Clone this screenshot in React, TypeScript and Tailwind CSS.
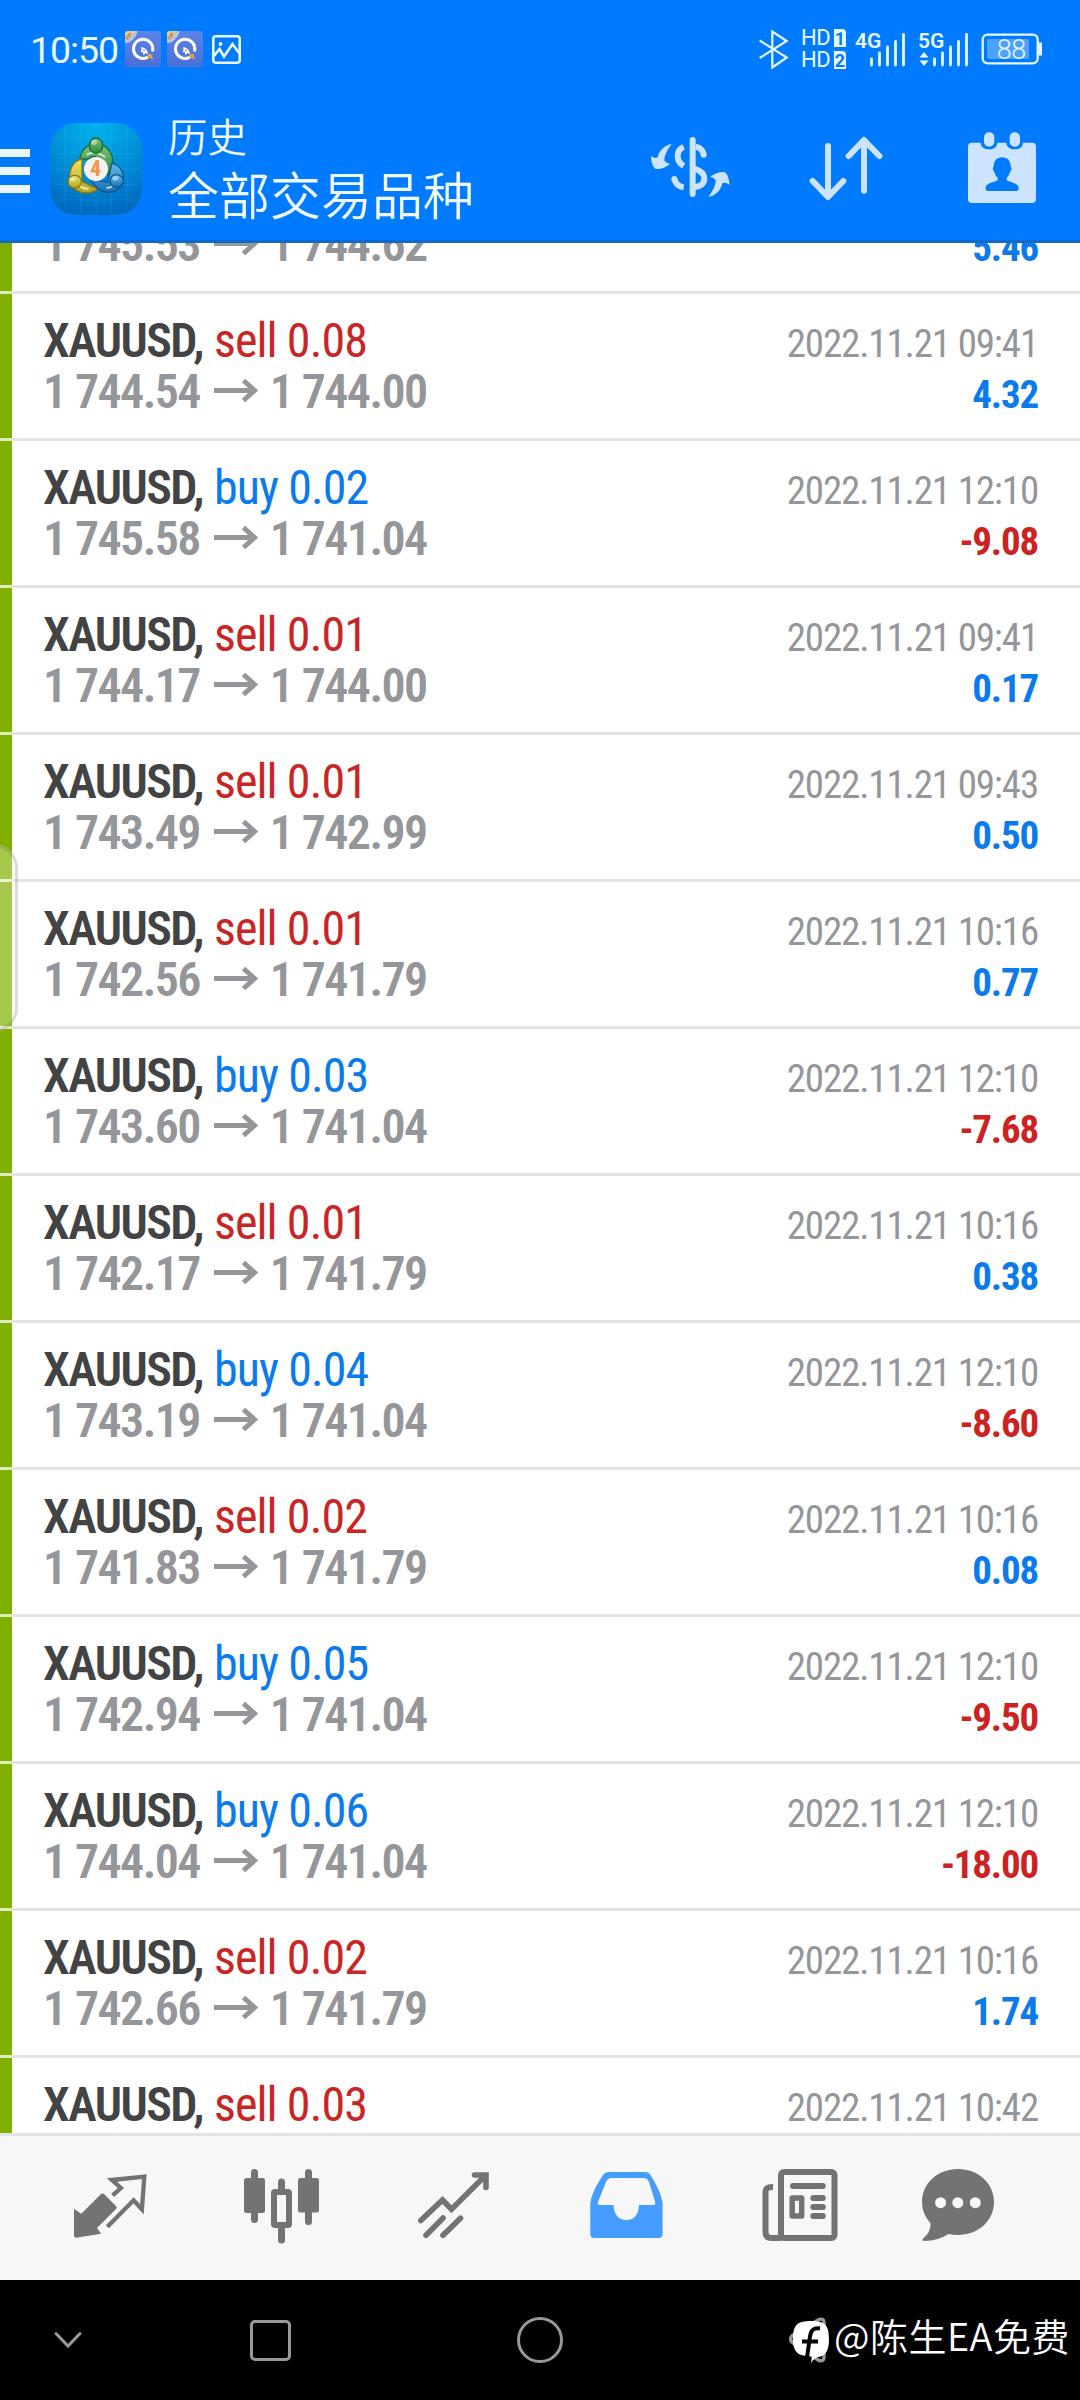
import type { ReactNode } from "react";

type Side = "buy" | "sell";

interface Deal {
  side: Side;
  volume: string;
  open: string;
  close: string;
  time: string;
  profit: string;
}

const DEALS: Deal[] = [
  { side: "sell", volume: "0.06", open: "1 745.53", close: "1 744.62", time: "2022.11.21 09:41", profit: "5.46" },
  { side: "sell", volume: "0.08", open: "1 744.54", close: "1 744.00", time: "2022.11.21 09:41", profit: "4.32" },
  { side: "buy", volume: "0.02", open: "1 745.58", close: "1 741.04", time: "2022.11.21 12:10", profit: "-9.08" },
  { side: "sell", volume: "0.01", open: "1 744.17", close: "1 744.00", time: "2022.11.21 09:41", profit: "0.17" },
  { side: "sell", volume: "0.01", open: "1 743.49", close: "1 742.99", time: "2022.11.21 09:43", profit: "0.50" },
  { side: "sell", volume: "0.01", open: "1 742.56", close: "1 741.79", time: "2022.11.21 10:16", profit: "0.77" },
  { side: "buy", volume: "0.03", open: "1 743.60", close: "1 741.04", time: "2022.11.21 12:10", profit: "-7.68" },
  { side: "sell", volume: "0.01", open: "1 742.17", close: "1 741.79", time: "2022.11.21 10:16", profit: "0.38" },
  { side: "buy", volume: "0.04", open: "1 743.19", close: "1 741.04", time: "2022.11.21 12:10", profit: "-8.60" },
  { side: "sell", volume: "0.02", open: "1 741.83", close: "1 741.79", time: "2022.11.21 10:16", profit: "0.08" },
  { side: "buy", volume: "0.05", open: "1 742.94", close: "1 741.04", time: "2022.11.21 12:10", profit: "-9.50" },
  { side: "buy", volume: "0.06", open: "1 744.04", close: "1 741.04", time: "2022.11.21 12:10", profit: "-18.00" },
  { side: "sell", volume: "0.02", open: "1 742.66", close: "1 741.79", time: "2022.11.21 10:16", profit: "1.74" },
  { side: "sell", volume: "0.03", open: "", close: "", time: "2022.11.21 10:42", profit: "" },
];

export default function App() {
  return (
    <div className="relative flex h-[2400px] w-[1080px] flex-col overflow-hidden bg-white font-['Roboto_Condensed',sans-serif]">
      <header className="h-[243px] shrink-0 border-b-[3px] border-[#1269c6] bg-[#007aff]">
        <StatusBar />
        <Toolbar />
      </header>

      {/* History list, scrolled so that the first deal is cut by the header */}
      <main className="min-h-0 flex-1 overflow-hidden">
        <div className="-mt-[96px]">
          {DEALS.map((deal, i) => (
            <DealRow key={i} deal={deal} />
          ))}
        </div>
      </main>

      <TabBar />
      <SystemNav />

      {/* Edge panel handle */}
      <div className="absolute top-[844px] -left-[30px] h-[188px] w-[48px] rounded-[24px] border-[3px] border-[#707070]/25 bg-white/30" />

      {/* Watermark */}
      <div className="absolute top-[2306px] right-[10px] flex items-center gap-[4px]">
        <WatermarkLogo />
        <span className="text-[38px] leading-[56px] font-[350] tracking-[0.5px] whitespace-nowrap text-white font-['Noto_Sans_CJK_SC',sans-serif]">
          @陈生EA免费
        </span>
      </div>
    </div>
  );
}

function StatusBar() {
  return (
    <div className="flex h-[98px] items-center justify-between pr-[36px] pl-[30px] text-[#e8f8ff]">
      <div className="flex items-center">
        <span className="w-[95px] pt-[4px] text-[37.5px] leading-none tracking-[-1.1px] font-['Roboto',sans-serif]">
          10:50
        </span>
        <RocketAppIcon />
        <RocketAppIcon className="ml-[6px]" />
        <svg className="ml-[9px] size-[29px]" viewBox="0 0 29 29" fill="none" stroke="currentColor" strokeWidth="2.6">
          <rect x="1.3" y="1.3" width="26.4" height="26.4" rx="2.5" />
          <path d="M2 21l5.5-7 4.5 7.5L20.500 9l6.500 9" />
          <circle cx="8.500" cy="9" r="1.900" fill="currentColor" stroke="none" />
        </svg>
      </div>
      <div className="flex items-center">
        <svg className="h-[40px] w-[32px]" viewBox="0 0 32 40" fill="none" stroke="currentColor" strokeWidth="2.2">
          <path d="M1.700 11.500l27 17-14.400 10V2.500l14.400 9.500-27 17" />
        </svg>
        <div className="ml-[11px] flex w-[45px] flex-col gap-[4px] text-[22px] leading-[18px] font-['Roboto',sans-serif]">
          {["1", "2"].map((n) => (
            <div key={n} className="flex items-center justify-between">
              <span className="tracking-[-0.5px]">HD</span>
              <span className="h-[18px] w-[12px] rounded-tr-[4px] bg-current text-center">
                <span className="block text-[18px] leading-[19px] font-bold text-[#007aff]">{n}</span>
              </span>
            </div>
          ))}
        </div>
        <Signal label="4G" className="ml-[8px]" />
        <Signal label="5G" className="ml-[9px]" transfer />
        <svg className="ml-[9px] h-[40px] w-[64px]" viewBox="0 0 64 40" fill="none">
          <rect x="2.700" y="5.700" width="55" height="28.600" rx="5" stroke="currentColor" strokeWidth="2.300" />
          <path d="M58.500 13.500h3.500v13h-3.500z" fill="currentColor" />
          <rect x="7" y="10" width="42" height="20" rx="2" fill="#fff" fillOpacity="0.3" />
          <text x="31.200" y="30" textAnchor="middle" fontSize="27" fill="currentColor" letterSpacing="-0.6" fontFamily="Roboto" fontWeight="350">
            88
          </text>
        </svg>
      </div>
    </div>
  );
}

function Signal({ label, className, transfer }: { label: string; className: string; transfer?: boolean }) {
  return (
    <svg className={`h-[40px] w-[54px] ${className}`} viewBox="0 0 54 40" fill="currentColor">
      <text x="1" y="18.500" fontSize="21" fontFamily="Roboto" fontWeight="600">
        {label}
      </text>
      <path d="M17.500 30v6M25.500 24v12M33.500 18v18M41.500 12.500v23.500M49.500 5.500v30.500" stroke="currentColor" strokeWidth="2.800" strokeLinecap="round" />
      {transfer && <path d="M2.500 28.500l4.500-5.500 4.500 5.500zM2.500 31.500l4.500 5.500 4.500-5.500z" />}
    </svg>
  );
}

function RocketAppIcon({ className = "" }: { className?: string }) {
  return (
    <svg className={`size-[36px] ${className}`} viewBox="0 0 108 108">
      <defs>
        <linearGradient id="rocket" x1="0" y1="0" x2="0" y2="1">
          <stop offset="0" stopColor="#5b84ea" />
          <stop offset="1" stopColor="#4a70d8" />
        </linearGradient>
      </defs>
      <rect width="108" height="108" rx="10" fill="url(#rocket)" />
      <path d="M0 36C14 38 34 22 38 0H10Q0 0 0 10z" fill="#b9c3dd" />
      <path d="M0 32L32 0H10Q0 0 0 10z" fill="#e5c99b" />
      <text x="3" y="27" fontSize="15" fontWeight="700" fill="#a8772f" transform="rotate(-45 6 24)" fontFamily="Roboto">
        VIP
      </text>
      <path d="M66 80A29 29 0 1 1 83 58" fill="none" stroke="#fff" strokeWidth="9" strokeLinecap="round" />
      <path d="M48 49c11 0 19 7 21 20l-7-3-6 7-3-10-6 1c3-5 3-10 1-15z" fill="#fff" />
      <circle cx="57" cy="58" r="2.500" fill="#4a70d8" />
      <path d="M68 70c7-4 15 0 14 7l3 9-10-4c-7 0-10-6-7-12z" fill="#e0a54c" />
    </svg>
  );
}

function Toolbar() {
  return (
    <div className="flex h-[142px] items-center pr-[36px] text-[#cce4ff]">
      <div className="mt-[4px] flex flex-col gap-[10px]">
        <span className="h-[8px] w-[30px] bg-[#ebf6ff]" />
        <span className="h-[8px] w-[30px] bg-[#ebf6ff]" />
        <span className="h-[8px] w-[30px] bg-[#ebf6ff]" />
      </div>
      <MetaTraderLogo />
      <div className="-mt-[1px] ml-[26px] flex flex-1 flex-col font-[350] text-[#eefaff] font-['Noto_Sans_CJK_SC',sans-serif]">
        <span className="text-[39.5px] leading-[48px]">历史</span>
        <span className="text-[51px] leading-[68px]">全部交易品种</span>
      </div>
      <div className="flex gap-[72px]">
        <svg className="size-[84px]" viewBox="24 12 252 252" fill="none" stroke="currentColor" strokeWidth="18">
          <path d="M158 51v162" strokeLinecap="round" />
          <path d="M131 72C108 81 106 114 131 129M167 71c14 3 22 12 24 24" />
          <circle cx="191" cy="95" r="9" fill="currentColor" stroke="none" />
          <path d="M131 193c-15-2-24-10-28-25" />
          <circle cx="103" cy="168" r="9" fill="currentColor" stroke="none" />
          <path d="M162 137c20 6 31 15 31 29 0 15-11 25-31 27" />
          <g fill="currentColor" stroke="none">
            <path d="M95 63C75 66 57 82 53 103c-6 3-14 1-20-5 0 17 6 40 17 40 15 0 30-6 40-16-8 0-14-4-17-10 0-17 11-34 22-49z" />
            <path d="M205 222c20-3 38-19 42-41 6-3 15-2 21 5 0-17-6-39-18-39-14 0-30 6-40 15 8 0 14 4 17 10 0 17-11 36-22 50z" />
          </g>
        </svg>
        <svg className="size-[84px]" viewBox="612 387 252 252" fill="none" stroke="currentColor" strokeWidth="18" strokeLinecap="round" strokeLinejoin="round">
          <path d="M684 444v152M638 549l46 48 46-48M792 578V428M746 474l46-48 46 48" />
        </svg>
        <svg className="size-[84px]" viewBox="1080 387 252 252" fill="currentColor">
          <path d="M1116 434h26c0 12 10 20 25 20s25-8 25-20h27c0 12 10 20 25 20s25-8 25-20h27q12 0 12 12v157q0 12-12 12h-180q-12 0-12-12V446q0-12 12-12z" />
          <rect x="1152" y="403" width="31" height="43" rx="15" />
          <rect x="1229" y="403" width="31" height="43" rx="15" />
          <path
            fill="#007aff"
            d="M1206 478c17 0 26 11 26 28 4 3 3 12-2 15-2 9-6 14-10 18v8c12 7 34 8 36 22v4q0 6-7 6h-85q-7 0-7-6v-4c2-14 24-15 36-22v-8c-4-4-8-9-10-18-5-3-6-12-2-15 0-17 9-28 25-28z"
          />
        </svg>
      </div>
    </div>
  );
}

function MetaTraderLogo() {
  return (
    <svg className="ml-[20px] size-[92px]" viewBox="0 0 276 276">
      <defs>
        <radialGradient id="mtBg" cx="0.500" cy="0" r="1.050">
          <stop offset="0" stopColor="#00b4ee" />
          <stop offset="0.500" stopColor="#0090d8" />
          <stop offset="1" stopColor="#0064bd" />
        </radialGradient>
        <linearGradient id="mtGreen" x1="0" y1="0" x2="0" y2="1">
          <stop offset="0" stopColor="#7cc47c" />
          <stop offset="1" stopColor="#2c8a3a" />
        </linearGradient>
        <linearGradient id="mtYellow" x1="0" y1="0" x2="0" y2="1">
          <stop offset="0" stopColor="#f0e260" />
          <stop offset="1" stopColor="#b3a324" />
        </linearGradient>
        <linearGradient id="mtBlue" x1="0" y1="0" x2="0" y2="1">
          <stop offset="0" stopColor="#64b9ea" />
          <stop offset="1" stopColor="#1670b5" />
        </linearGradient>
      </defs>
      <rect width="276" height="276" rx="78" fill="url(#mtBg)" />
      <path
        d="M45 10v256M92 0v276M138 0v276M184 0v276M231 10v256M10 45h256M0 92h276M0 138h276M0 184h276M10 231h256"
        stroke="#5fd0ff"
        strokeOpacity="0.220"
        strokeWidth="2"
      />
      <g strokeWidth="4">
        <path d="M90 108C92 82 112 62 138 62c30 0 52 28 50 58-1 16-6 26-14 36l-30-50c-10-8-20-8-28 2z" fill="url(#mtGreen)" stroke="#1c6a33" />
        <path d="M96 108c-24 4-36 26-37 52-2 28 20 50 50 50 14 0 26-4 34-12L96 176z" fill="url(#mtYellow)" stroke="#85791a" />
        <path d="M186 120c20 6 34 22 34 44 0 28-20 44-44 44-26-2-44-18-54-40l50 10z" fill="url(#mtBlue)" stroke="#0e5590" />
        <path d="M110 95q28-14 56 8M76 172q10 24 40 26M200 170q-4 22-30 26" fill="none" stroke="#f2fbe8" strokeOpacity="0.750" strokeWidth="6" />
        <ellipse cx="138" cy="68" rx="20" ry="23" fill="url(#mtGreen)" stroke="#1c6a33" />
        <ellipse cx="74" cy="176" rx="20" ry="19" fill="url(#mtYellow)" stroke="#85791a" />
        <ellipse cx="200" cy="174" rx="20" ry="19" fill="url(#mtBlue)" stroke="#0e5590" />
      </g>
      <ellipse cx="132" cy="58" rx="9" ry="8" fill="#fff" fillOpacity="0.450" />
      <ellipse cx="68" cy="168" rx="9" ry="7" fill="#fff" fillOpacity="0.450" />
      <ellipse cx="196" cy="166" rx="9" ry="7" fill="#fff" fillOpacity="0.450" />
      <circle cx="138" cy="138" r="36" fill="#f4f3f1" />
      <text x="137" y="160" textAnchor="middle" fontSize="64" fontWeight="700" fontFamily="Roboto Condensed" fill="#f0964a">
        4
      </text>
    </svg>
  );
}

function DealRow({ deal }: { deal: Deal }) {
  const sideColor = deal.side === "buy" ? "text-[#0a7aec]" : "text-[#c92525]";
  const profitColor = deal.profit.startsWith("-") ? "text-[#cc2222]" : "text-[#0a7aec]";

  return (
    <div>
      <div className="flex h-[144px]">
        <div className="w-[12px] bg-[#7fb000]" />
        <div className="flex-1 pt-[21px] pr-[42px] pl-[31px] leading-[51px]">
          <div className="flex h-[51px] items-baseline">
            <span className="text-[48px] font-semibold tracking-[-1.55px] text-[#434343]">XAUUSD,</span>
            <span className={`ml-[11px] flex-1 text-[48px] tracking-[-0.9px] ${sideColor}`}>
              {deal.side} {deal.volume}
            </span>
            <span className="text-[39px] tracking-[-1.15px] text-[#959699]">{deal.time}</span>
          </div>
          {deal.open && (
            <div className="flex h-[51px] items-baseline text-[48px] font-semibold tracking-[-1.6px] text-[#959699]">
              <span>{deal.open}</span>
              <svg className="mr-[12px] ml-[14px] h-[30px] w-[44px]" viewBox="0 0 44 30" fill="none" stroke="currentColor" strokeWidth="5">
                <path d="M0 12.500H40M29.500 2.500l11 10-11 10" />
              </svg>
              <span className="flex-1">{deal.close}</span>
              <span className={`text-[39px] font-bold tracking-[-1.2px] ${profitColor}`}>{deal.profit}</span>
            </div>
          )}
        </div>
      </div>
      <div className="flex h-[3px] bg-[#e4e4e4]">
        <div className="w-[12px] bg-[#dfebbf]" />
      </div>
    </div>
  );
}

function TabIcon({ active, children }: { active?: boolean; children: ReactNode }) {
  return (
    <svg className={`size-[96px] ${active ? "text-[#449dff]" : "text-[#737373]"}`} viewBox="0 0 96 96" fill="currentColor">
      {children}
    </svg>
  );
}

function TabBar() {
  return (
    <nav className="flex h-[147px] shrink-0 items-center justify-between border-t-[3px] border-[#e4e4e4] bg-[#f7f7f7] px-[62px]">
      {/* Quotes */}
      <TabIcon>
        <path d="M12 48.700l7.300 5L38.500 34.500q2-2 4 0L54 46q1.500 1.500 0 3L35 68l4.200 5.700-25 4q-2.200 0-2.200-2z" />
        <path d="M50.600 35.300l8.300-7.300-9-8 32.400-3.300-2.400 32.600-8.300-9-26.200 26.400" fill="none" stroke="currentColor" strokeWidth="4.300" />
      </TabIcon>
      {/* Chart */}
      <TabIcon>
        <path d="M20.500 12.500v47M74.500 12.500v49M47.500 22v8M47.500 66v14" stroke="currentColor" strokeWidth="7" strokeLinecap="round" />
        <rect x="10" y="18" width="21" height="35" rx="2.500" />
        <rect x="64" y="18" width="21" height="34.500" rx="2.500" />
        <rect x="40" y="32" width="15" height="33" rx="1" fill="#f7f7f7" stroke="currentColor" strokeWidth="6" />
      </TabIcon>
      {/* Trade */}
      <TabIcon>
        <path
          d="M14.800 60.500l21.700-20.500 9 9.300L80 15M68.500 15H80v12.500M20 75.200l17-17.200M37 75.200l17.500-17"
          fill="none"
          stroke="currentColor"
          strokeWidth="5.600"
          strokeLinecap="round"
        />
      </TabIcon>
      {/* History */}
      <TabIcon active>
        <path
          fillRule="evenodd"
          d="M31 12h36q4 0 5.500 3C79 26 83 33 84.600 43v31q0 4-4 4H16.300q-4 0-4-4V43C14 33 18.500 25 25 15q2-3 6-3zM34 18q-4.500 0-6 4l-8 20q-1 3 2 3h13.500q1 15 12.800 15T61 45h14q3 0 2.200-3L71 22q-1.500-4-6-4z"
        />
      </TabIcon>
      {/* News */}
      <TabIcon>
        <rect x="31" y="12" width="53.500" height="66" rx="3" fill="none" stroke="currentColor" strokeWidth="6" />
        <path d="M23 27q-7.500-.500-7.500 5v40q0 6 6 6h10" fill="none" stroke="currentColor" strokeWidth="6" />
        <path d="M43 26h29.800M63.300 38h9.500M63.300 47h9.500M63.300 56h9.500" stroke="currentColor" strokeWidth="6" strokeLinecap="round" />
        <rect x="42.200" y="38" width="9.500" height="18" fill="none" stroke="currentColor" strokeWidth="5.400" strokeLinejoin="round" />
      </TabIcon>
      {/* Messages */}
      <TabIcon>
        <path d="M36 9c20 0 36 14 36 33S56 75 36 75q-5 0-9.500-1Q16 81 2 81q-2.500-.500-1-2.500 8-6 7.500-15.200Q0 54 0 42C0 23 16 9 36 9z" />
        <g fill="#f7f7f7">
          <circle cx="18.600" cy="42.700" r="5.500" />
          <circle cx="35.800" cy="42.700" r="5.500" />
          <circle cx="53.300" cy="42.700" r="5.500" />
        </g>
      </TabIcon>
    </nav>
  );
}

function SystemNav() {
  return (
    <div className="flex h-[120px] shrink-0 items-center bg-black pl-[48px] text-[#999999]">
      <svg className="size-[40px]" viewBox="0 0 40 40" fill="none" stroke="currentColor" strokeWidth="3" strokeLinecap="round">
        <path d="M8 13.500l12 12.500 12-12.500" />
      </svg>
      <div className="ml-[162px] size-[41px] rounded-[5px] border-[3px] border-current" />
      <div className="ml-[226px] size-[46px] rounded-full border-[3px] border-current" />
      <svg className="ml-[225px] h-[46px] w-[40px]" viewBox="0 0 40 46" fill="none" stroke="currentColor" strokeWidth="3.500" strokeLinejoin="round">
        <path d="M2.500 22q0-2 2-3.500L31 2.500q5-1.500 5 3V40q0 5-5 3.500L4.500 25.500q-2-1.500-2-3.500z" />
      </svg>
    </div>
  );
}

function WatermarkLogo() {
  return (
    <svg className="mt-[14px] h-[44px] w-[38px]" viewBox="0 0 38 44">
      <path
        d="M19 1c13 0 18 3 18 18 0 11-3 17-11 18q-4 1-7 6l1-7C5 37 1 31 1 19 1 4 6 1 19 1z"
        fill="#fff"
      />
      <path d="M28 8.500c-7-1-9 2-10 8l-3 21M10 21.500h16" fill="none" stroke="#000" strokeWidth="4" />
    </svg>
  );
}
